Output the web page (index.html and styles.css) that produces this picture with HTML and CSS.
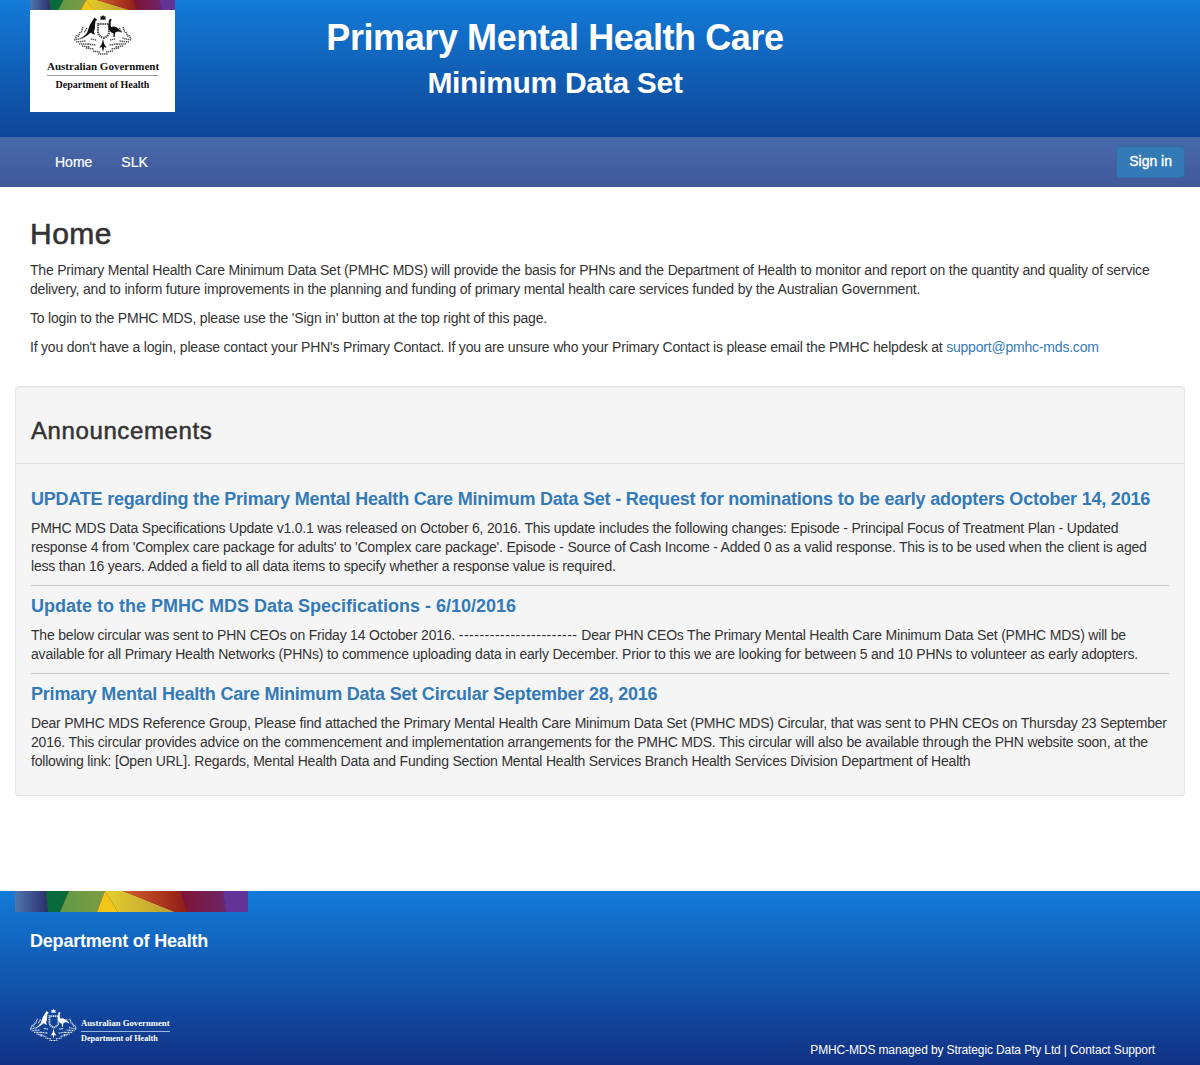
FILE: index.html
```html
<!DOCTYPE html>
<html lang="en">
<head>
  <meta charset="UTF-8" />
  <title>Primary Mental Health Care Minimum Data Set</title>
  <link rel="stylesheet" href="styles.css">
</head>
<body>
  <svg class="defs" width="0" height="0">
    <defs>
      <linearGradient id="g-navy"><stop offset="0" stop-color="#4f76ab"/><stop offset="1" stop-color="#2a2f6e"/></linearGradient>
      <linearGradient id="g-green"><stop offset="0" stop-color="#5f9a45"/><stop offset="1" stop-color="#7f9a45"/></linearGradient>
      <linearGradient id="g-yellow"><stop offset="0" stop-color="#e3cf2c"/><stop offset="1" stop-color="#bd9a35"/></linearGradient>
      <linearGradient id="g-red"><stop offset="0" stop-color="#d3602a"/><stop offset="1" stop-color="#8f1b16"/></linearGradient>
      <linearGradient id="g-plum"><stop offset="0" stop-color="#7e1430"/><stop offset="1" stop-color="#6d2468"/></linearGradient>
      <symbol id="strip" viewBox="0 0 233 21" preserveAspectRatio="none">
        <rect width="233" height="21" fill="#7a1c3a"/>
        <polygon points="0,0 31,0 33,21 0,21" fill="url(#g-navy)"/>
        <polygon points="31,0 54,0 45,21 33,21" fill="#08693a"/>
        <polygon points="54,0 90,0 82,21 45,21" fill="url(#g-green)"/>
        <polygon points="90,0 108,0 160,21 103,21" fill="url(#g-yellow)"/>
        <polygon points="90,0 103,21 82,21" fill="#f4c618"/>
        <polygon points="108,0 165,0 172,21 160,21" fill="url(#g-red)"/>
        <polygon points="165,0 208,0 211,21 172,21" fill="url(#g-plum)"/>
        <polygon points="208,0 233,0 233,21 211,21" fill="#633397"/>
      </symbol>
      <symbol id="crest" viewBox="0 0 58 41">
        <!-- wattle -->
        <g class="crest-speck">
          <path d="M13 13 l-3 5 M9 12 l-2 6 M6 17 l-2 5 M3 20 l-2 4 M0 25 l9 -2 M2 27 l10 -1 M5 29 l10 0 M8 31 l8 1 M12 33 l8 1 M14 29 l8 1"/>
          <path d="M45 13 l3 5 M49 12 l2 6 M52 17 l2 5 M55 20 l2 4 M57 25 l-9 -2 M55 27 l-10 -1 M52 29 l-10 0 M49 31 l-8 1 M45 33 l-8 1 M43 29 l-8 1"/>
          <path d="M17 24 l5 1 M41 24 l-5 1 M19 36 l7 1 M39 36 l-7 1 M24 39 h10"/>
        </g>
        <!-- shield -->
        <g class="crest-shield">
          <path d="M24 9 h11 v8 q0 4 -5.500 6 q-5.500 -2 -5.500 -6z"/>
        </g>
        <!-- star -->
        <path d="M29 0 l1 1.600 1.800 -.3 -.6 1.700 1 1.500 -3.200 .2 -3.200 -.2 1 -1.500 -.6 -1.700 1.800 .3z"/>
        <!-- kangaroo -->
        <path d="M20.500 2.500 l1.500 1.300 1.300 1.200 -1.800 1 -.4 3.500 -.2 4 -1.200 3.500 1.400 2.500 -2.500 -.5 -1.600 -1.500 -2.500 2 -4 2.700 -4 1.300 3.500 -2.500 3 -3 1.600 -4.500 1.500 -4 2.200 -3.500z"/>
        <!-- emu -->
        <path d="M35 4.500 l2 -.5 .8 1 -1 1 -.2 3.500 .4 2.500 3 -.6 3 1 2.500 2.600 2 2 -3.500 -.4 -2.500 .6 -.6 1.800 -.2 3 -1.400 0 .2 -3.600 -2.200 -.8 -2.300 -2.800 -.6 -3.400z"/>
        <!-- trunk below shield -->
        <path d="M29 24 l1.200 5 2.500 4 -2.500 -1 -1.200 5 -1.200 -5 -2.500 1 2.500 -4z"/>
      </symbol>
    </defs>
  </svg>

  <header class="site-header">
    <div class="logo">
      <svg class="rainbow rainbow-top"><use href="#strip"/></svg>
      <svg class="crest crest-dark"><use href="#crest"/></svg>
      <div class="logo-gov">Australian Government</div>
      <div class="logo-dept">Department of Health</div>
    </div>
    <div class="titles">
      <h1>Primary Mental Health Care</h1>
      <h2>Minimum Data Set</h2>
    </div>
  </header>

  <nav class="navbar">
    <div class="nav-links">
      <a href="#">Home</a>
      <a href="#">SLK</a>
    </div>
    <a class="btn-signin" href="#">Sign in</a>
  </nav>

  <main class="content">
    <section class="intro">
      <h2>Home</h2>
      <p>The Primary Mental Health Care Minimum Data Set (PMHC MDS) will provide the basis for PHNs and the Department of Health to monitor and report on the quantity and quality of service delivery, and to inform future improvements in the planning and funding of primary mental health care services funded by the Australian Government.</p>
      <p>To login to the PMHC MDS, please use the 'Sign in' button at the top right of this page.</p>
      <p>If you don't have a login, please contact your PHN's Primary Contact. If you are unsure who your Primary Contact is please email the PMHC helpdesk at <a href="#">support@pmhc-mds.com</a></p>
    </section>

    <section class="panel">
      <div class="panel-head">
        <h3>Announcements</h3>
      </div>
      <div class="panel-body">
        <article class="news">
          <h4><a href="#">UPDATE regarding the Primary Mental Health Care Minimum Data Set - Request for nominations to be early adopters October 14, 2016</a></h4>
          <p>PMHC MDS Data Specifications Update v1.0.1 was released on October 6, 2016. This update includes the following changes: Episode - Principal Focus of Treatment Plan - Updated response 4 from 'Complex care package for adults' to 'Complex care package'. Episode - Source of Cash Income - Added 0 as a valid response. This is to be used when the client is aged less than 16 years. Added a field to all data items to specify whether a response value is required.</p>
        </article>
        <article class="news">
          <h4 class="title-wide"><a href="#">Update to the PMHC MDS Data Specifications - 6/10/2016</a></h4>
          <p>The below circular was sent to PHN CEOs on Friday 14 October 2016. <span class="dashes">-----------------------</span> Dear PHN CEOs The Primary Mental Health Care Minimum Data Set (PMHC MDS) will be available for all Primary Health Networks (PHNs) to commence uploading data in early December. Prior to this we are looking for between 5 and 10 PHNs to volunteer as early adopters.</p>
        </article>
        <article class="news">
          <h4><a href="#">Primary Mental Health Care Minimum Data Set Circular September 28, 2016</a></h4>
          <p>Dear PMHC MDS Reference Group, Please find attached the Primary Mental Health Care Minimum Data Set (PMHC MDS) Circular, that was sent to PHN CEOs on Thursday 23 September 2016. This circular provides advice on the commencement and implementation arrangements for the PMHC MDS. This circular will also be available through the PHN website soon, at the following link: [Open URL]. Regards, Mental Health Data and Funding Section Mental Health Services Branch Health Services Division Department of Health</p>
        </article>
      </div>
    </section>
  </main>

  <footer class="site-footer">
    <svg class="rainbow rainbow-foot"><use href="#strip"/></svg>
    <div class="foot-title">Department of Health</div>
    <div class="foot-bottom">
      <div class="foot-logo">
        <svg class="crest crest-light"><use href="#crest"/></svg>
        <div class="foot-logo-text">
          <div class="foot-gov">Australian Government</div>
          <div class="foot-dept">Department of Health</div>
        </div>
      </div>
      <div class="foot-links">PMHC-MDS managed by Strategic Data Pty Ltd | Contact Support</div>
    </div>
  </footer>
</body>
</html>
```

FILE: styles.css
```css
* {
  box-sizing: border-box;
}
body {
  margin: 0;
  font-family: "Liberation Sans", Arial, sans-serif;
  font-size: 14px;
  line-height: 19px;
  letter-spacing: -0.2px;
  color: #333;
  background: #fff;
}
.defs {
  position: absolute;
}
a {
  color: #337ab7;
  text-decoration: none;
}

/* header */
.site-header {
  height: 137px;
  display: flex;
  padding-left: 30px;
  background: linear-gradient(to bottom, #137bd7 0%, #0e4597 100%);
}
.logo {
  width: 145px;
  height: 112px;
  background: #fff;
  color: #111;
  text-align: center;
  font-family: "Liberation Serif", serif;
  font-weight: bold;
  letter-spacing: 0;
}
.rainbow {
  display: block;
}
.rainbow-top {
  width: 145px;
  height: 10px;
}
.crest {
  display: block;
}
.crest-speck {
  fill: none;
  stroke: currentColor;
  stroke-width: 1.500;
  stroke-dasharray: 1.300 .6;
}
.crest-shield {
  fill: none;
  stroke: currentColor;
  stroke-width: 2.200;
  stroke-dasharray: 1.500 .7;
}
.crest-dark {
  width: 58px;
  height: 41px;
  margin: 5px auto 4px;
  color: #555;
  fill: #111;
}
.logo-gov {
  width: 111px;
  margin: 0 auto;
  font-size: 11px;
  line-height: 13px;
  white-space: nowrap;
  border-bottom: 1px solid #999;
  padding-bottom: 2px;
}
.logo-dept {
  font-size: 10px;
  line-height: 14px;
  margin-top: 2px;
  white-space: nowrap;
}
.titles {
  width: 760px;
  color: #fff;
  text-align: center;
}
.titles h1 {
  margin: 16px 0 0;
  font-size: 36px;
  line-height: 44px;
  font-weight: bold;
  letter-spacing: -0.42px;
}
.titles h2 {
  margin: 3px 0 0;
  font-size: 30px;
  line-height: 40px;
  font-weight: bold;
  letter-spacing: -0.3px;
}

/* nav */
.navbar {
  height: 50px;
  display: flex;
  justify-content: space-between;
  align-items: center;
  padding: 0 15px 0 55px;
  background: linear-gradient(to bottom, #4669aa 0%, #42599b 100%);
}
.nav-links {
  display: flex;
  gap: 29px;
}
.nav-links a {
  color: #fff;
  font-size: 14px;
  letter-spacing: 0;
  -webkit-text-stroke: 0.2px #fff;
}
.btn-signin {
  color: #fff;
  font-size: 14px;
  letter-spacing: 0;
  -webkit-text-stroke: 0.35px #fff;
  padding: 5px 12px;
  height: 32px;
  border: 1px solid #2e6da4;
  border-radius: 4px;
  background: #337ab7;
}

/* main */
.content {
  padding: 0 15px;
  height: 704px;
}
.intro {
  padding: 0 15px;
}
.intro h2 {
  margin: 0 0 9px;
  padding-top: 29px;
  font-size: 30px;
  line-height: 36px;
  font-weight: normal;
  letter-spacing: 0.5px;
  -webkit-text-stroke: 0.6px #333;
}
.intro p {
  margin: 0 0 10px;
}
.panel {
  margin-top: 29px;
  background: #f5f5f5;
  border: 1px solid #e3e3e3;
  border-radius: 4px;
  box-shadow: inset 0 1px 1px rgba(0,0,0,0.05);
}
.panel-head {
  height: 77px;
  padding: 0 15px;
  border-bottom: 1px solid #ddd;
}
.panel-head h3 {
  margin: 0;
  padding-top: 29px;
  font-size: 24px;
  line-height: 29px;
  font-weight: normal;
  letter-spacing: 0.6px;
  -webkit-text-stroke: 0.5px #333;
}
.panel-body {
  padding: 0 15px 15px;
}
.news {
  padding-top: 9px;
  border-top: 1px solid #ccc;
}
.news:first-child {
  border-top: none;
  padding-top: 24px;
}
.news h4 {
  margin: 0 0 9px;
  font-size: 18px;
  line-height: 22px;
  font-weight: bold;
  letter-spacing: -0.21px;
}
.news h4.title-wide {
  letter-spacing: 0;
}
.news p {
  margin: 0 0 9px;
}
.dashes {
  letter-spacing: 0.5px;
}

/* footer */
.site-footer {
  height: 174px;
  padding: 0 15px;
  display: flex;
  flex-direction: column;
  color: #fff;
  background: linear-gradient(to bottom, #137bd7 0%, #113184 100%);
}
.rainbow-foot {
  width: 233px;
  height: 21px;
  flex: none;
}
.foot-title {
  margin: 18px 0 0 15px;
  font-size: 18px;
  line-height: 22px;
  font-weight: bold;
  letter-spacing: -0.2px;
}
.foot-bottom {
  margin-top: auto;
  display: flex;
  justify-content: space-between;
  align-items: flex-end;
  padding: 0 30px 8px 15px;
}
.foot-logo {
  display: flex;
  gap: 4px;
  margin-bottom: 13px;
  font-family: "Liberation Serif", serif;
  font-weight: bold;
  letter-spacing: 0;
}
.crest-light {
  width: 47px;
  height: 35px;
  color: #dfe8f6;
  fill: #fff;
}
.foot-logo-text {
  margin-top: 10px;
}
.foot-gov {
  font-size: 8.7px;
  line-height: 11px;
  border-bottom: 1px solid #9db8e0;
  padding-bottom: 2px;
  white-space: nowrap;
}
.foot-dept {
  font-size: 8.2px;
  line-height: 11px;
  margin-top: 1px;
  white-space: nowrap;
}
.foot-links {
  font-size: 12px;
  line-height: 14px;
  letter-spacing: -0.12px;
}
```
